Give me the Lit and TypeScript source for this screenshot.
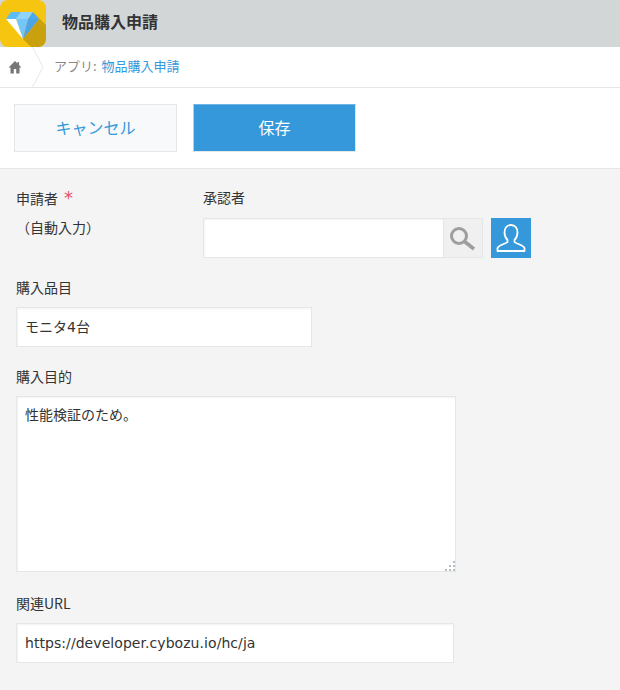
import { LitElement, html, css } from "lit";
import { customElement } from "lit/decorators.js";

@customElement("app-root")
export class AppRoot extends LitElement {
  static styles = css`
    :host {
      display: block;
      width: 620px;
      height: 690px;
      overflow: hidden;
      background: #f4f4f4;
      color: #333;
      font-family: "DejaVu Sans", "Noto Sans CJK JP", sans-serif;
      font-size: 14px;
    }
    * { box-sizing: border-box; }
    .header {
      display: flex;
      align-items: center;
      gap: 16px;
      height: 47px;
      background: #d3d6d7;
    }
    .logo { display: block; width: 46px; height: 47px; flex: none; }
    .title { font-size: 16px; font-weight: 700; line-height: 22px; margin-bottom: 5px; color: #333; font-family: "Noto Sans CJK JP", sans-serif; }
    .crumbs {
      display: flex;
      align-items: center;
      height: 41px;
      background: #fff;
      border-bottom: 1px solid #e3e7e8;
    }
    .home { display: block; width: 14px; height: 14px; margin-left: 8px; flex: none; }
    .chev { display: block; width: 12px; height: 40px; margin-left: 10px; flex: none; }
    .crumb-text { margin-left: 10px; margin-bottom: 3px; font-size: 13px; color: #888; font-family: "Noto Sans CJK JP", sans-serif; }
    .crumb-text a { color: #3498db; text-decoration: none; margin-left: 2px; }
    .toolbar {
      display: flex;
      gap: 16px;
      height: 81px;
      padding: 16px 14px;
      background: #fff;
      border-bottom: 1px solid #e3e7e8;
    }
    .btn {
      width: 163px;
      height: 48px;
      font-family: "Noto Sans CJK JP", sans-serif;
      font-size: 16px;
      padding: 0 0 2px;
    }
    .cancel { background: #f7f9fa; border: 1px solid #e3e7e8; color: #3498db; }
    .save { background: #3498db; border: 1px solid #e3e7e8; border-top-color: #6fb5e5; border-left-color: #a9d3ef; color: #fff; }
    .form {
      display: flex;
      flex-direction: column;
      padding: 20px 0 0 16px;
    }
    .row { display: flex; height: 89px; }
    .applicant { width: 187px; }
    label, .label {
      display: block;
      height: 19px;
      line-height: 19px;
      font-size: 14px;
      font-family: "Noto Sans CJK JP", sans-serif;
      color: #333;
    }
    .row .label { line-height: 17px; }
    .purpose + .group label { line-height: 21px; }
    .req { color: #e8506a; font-size: 18px; margin-left: 6px; font-family: "DejaVu Sans", sans-serif; }
    .auto { margin-top: 10px; font-size: 14px; height: 19px; line-height: 19px; font-family: "Noto Sans CJK JP", sans-serif; }
    .pick { display: flex; margin-top: 10px; }
    .field {
      display: block;
      height: 40px;
      padding: 0 8px 2px;
      background: #fff;
      border: 1px solid #e3e7e8;
      box-shadow: inset 1px 1px 2px rgba(0, 0, 0, 0.05);
      font: inherit;
      color: #333;
      outline: none;
    }
    .approver { width: 240px; border-right: 0; }
    .search {
      display: flex;
      align-items: center;
      justify-content: center;
      width: 40px;
      height: 40px;
      padding: 0;
      background: #f0f0f0;
      border: 1px solid #e3e7e8;
    }
    .search svg { display: block; width: 26px; height: 26px; }
    .user {
      display: flex;
      align-items: center;
      justify-content: center;
      width: 40px;
      height: 40px;
      margin-left: 8px;
      padding: 0;
      background: #3498db;
      border: 0;
    }
    .user svg { display: block; width: 30px; height: 30px; }
    .group { margin-bottom: 20px; }
    .group .field, .group .area-wrap { margin-top: 10px; }
    .group.purpose { margin-bottom: 21px; }
    .group .url { margin-top: 11px; padding-bottom: 0; letter-spacing: 0.06px; }
    .item { width: 296px; }
    .area-wrap { position: relative; width: 440px; height: 176px; }
    .area {
      display: block;
      width: 100%;
      height: 100%;
      padding: 7px 8px;
      resize: none;
      background: #fff;
      border: 1px solid #e3e7e8;
      box-shadow: inset 1px 1px 2px rgba(0, 0, 0, 0.05);
      font: 14px/20px "Noto Sans CJK JP", sans-serif;
      color: #333;
      outline: none;
    }
    .grip { position: absolute; right: 0; bottom: 0; width: 12px; height: 12px; display: block; }
    .url { width: 438px; }
  `;

  render() {
    return html`
      <div class="header">
        <svg class="logo" viewBox="0 0 46 47">
          <defs><clipPath id="r"><rect width="46" height="47" rx="8" /></clipPath></defs>
          <g clip-path="url(#r)">
            <rect width="46" height="47" fill="#f5c50f" />
            <polygon points="33,12 39,19 23,39 31,47 46,47 46,25" fill="#c9a00e" />
            <polygon points="11,12 21,12 16,19 6,19" fill="#5cbcf6" />
            <polygon points="21,12 33,12 28,19 16,19" fill="#8ed3fa" />
            <polygon points="33,12 39,19 28,19" fill="#4da8ee" />
            <polygon points="16,19 28,19 23,39" fill="#74c6f9" />
            <polygon points="6,19 16,19 23,39" fill="#ffffff" />
            <polygon points="28,19 39,19 23,39" fill="#4da3e6" />
          </g>
        </svg>
        <span class="title">物品購入申請</span>
      </div>
      <div class="crumbs">
        <svg class="home" viewBox="0 0 14 14">
          <path d="M7 1 L0.5 7.5 L2.5 7.5 L2.5 13.5 L5.8 13.5 L5.8 9 L8.2 9 L8.2 13.5 L11.5 13.5 L11.5 7.5 L13.5 7.5 L11 5 L11 2 L9.5 2 L9.5 3.5 Z" fill="#777" />
        </svg>
        <svg class="chev" viewBox="0 0 12 40">
          <path d="M0.5 0 L11 20 L0.5 40" fill="none" stroke="#e3e7e8" stroke-width="1" />
        </svg>
        <span class="crumb-text">アプリ: <a href="#">物品購入申請</a></span>
      </div>
      <div class="toolbar">
        <button class="btn cancel">キャンセル</button>
        <button class="btn save">保存</button>
      </div>
      <div class="form">
        <div class="row">
          <div class="applicant">
            <div class="label">申請者<span class="req">*</span></div>
            <div class="auto">（自動入力）</div>
          </div>
          <div>
            <div class="label">承認者</div>
            <div class="pick">
              <input class="field approver" />
              <button class="search" aria-label="検索">
                <svg viewBox="0 0 26 26">
                  <circle cx="9" cy="11" r="7.5" fill="none" stroke="#9e9e9e" stroke-width="3" />
                  <path d="M14.5 16.5 L24 24" stroke="#9e9e9e" stroke-width="3.6" />
                </svg>
              </button>
              <button class="user" aria-label="ユーザー">
                <svg viewBox="0 0 30 30">
                  <path d="M15 2 C10.5 2 8.5 5.5 8.5 9.5 C8.5 13 10 15.5 11.5 17 L11.5 19 C10 21 3 21.5 1.5 25 L1.5 28 L28.5 28 L28.5 25 C27 21.5 20 21 18.5 19 L18.5 17 C20 15.5 21.5 13 21.5 9.5 C21.5 5.5 19.5 2 15 2 Z" fill="none" stroke="#fff" stroke-width="1.8" stroke-linejoin="round" />
                </svg>
              </button>
            </div>
          </div>
        </div>
        <div class="group">
          <label>購入品目</label>
          <input class="field item" value="モニタ4台" />
        </div>
        <div class="group purpose">
          <label>購入目的</label>
          <div class="area-wrap">
            <textarea class="area">性能検証のため。</textarea>
            <svg class="grip" viewBox="0 0 12 12">
              <g fill="#b4bec6">
                <rect x="9" y="1" width="2" height="2" />
                <rect x="5" y="5" width="2" height="2" />
                <rect x="9" y="5" width="2" height="2" />
                <rect x="1" y="9" width="2" height="2" />
                <rect x="5" y="9" width="2" height="2" />
                <rect x="9" y="9" width="2" height="2" />
              </g>
            </svg>
          </div>
        </div>
        <div class="group">
          <label>関連URL</label>
          <input class="field url" value="https://developer.cybozu.io/hc/ja" />
        </div>
      </div>
    `;
  }
}
